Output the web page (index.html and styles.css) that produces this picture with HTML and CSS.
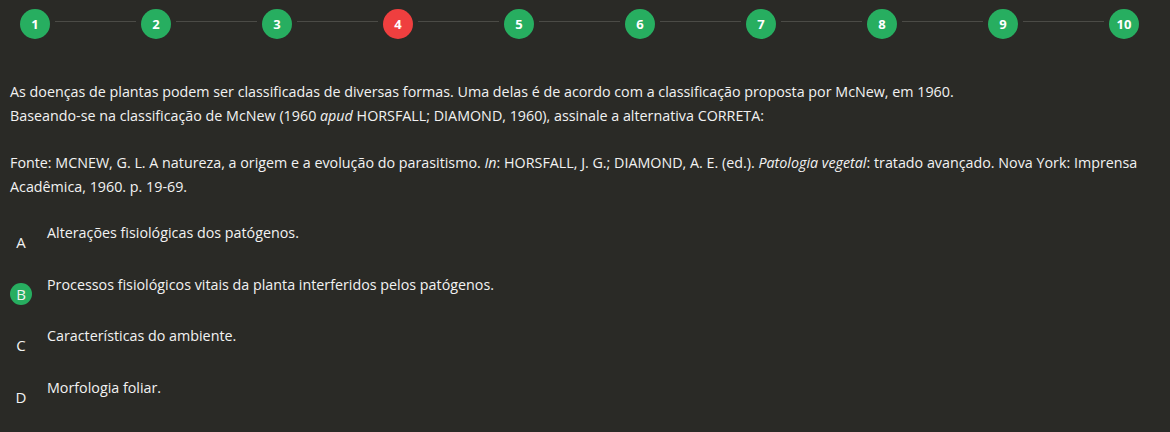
FILE: index.html
```html
<!DOCTYPE html>
<html lang="pt-BR">
<head>
<meta charset="utf-8">
<link rel="stylesheet" href="styles.css">
</head>
<body>
<div class="page">
  <nav class="steps">
    <span class="step">1</span><span class="line"></span>
    <span class="step">2</span><span class="line"></span>
    <span class="step">3</span><span class="line"></span>
    <span class="step current">4</span><span class="line"></span>
    <span class="step">5</span><span class="line"></span>
    <span class="step">6</span><span class="line"></span>
    <span class="step">7</span><span class="line"></span>
    <span class="step">8</span><span class="line"></span>
    <span class="step">9</span><span class="line"></span>
    <span class="step">10</span>
  </nav>
  <section class="question">
    <p class="stem">As doenças de plantas podem ser classificadas de diversas formas. Uma delas é de acordo com a classificação proposta por McNew, em 1960.<br>Baseando-se na classificação de McNew (1960 <em>apud</em> HORSFALL; DIAMOND, 1960), assinale a alternativa CORRETA:</p>
    <p class="source">Fonte: MCNEW, G. L. A natureza, a origem e a evolução do parasitismo. <em>In</em>: HORSFALL, J. G.; DIAMOND, A. E. (ed.). <em>Patologia vegetal</em>: tratado avançado. Nova York: Imprensa Acadêmica, 1960. p. 19-69.</p>
    <ul class="options">
      <li class="option"><span class="letter">A</span><span class="text">Alterações fisiológicas dos patógenos.</span></li>
      <li class="option selected"><span class="letter">B</span><span class="text">Processos fisiológicos vitais da planta interferidos pelos patógenos.</span></li>
      <li class="option"><span class="letter">C</span><span class="text">Características do ambiente.</span></li>
      <li class="option"><span class="letter">D</span><span class="text">Morfologia foliar.</span></li>
    </ul>
  </section>
</div>
</body>
</html>
```
FILE: styles.css
```css
html, body {
  margin: 0;
  padding: 0;
  background: #2a2a26;
}
body {
  font-family: "Open Sans", "Liberation Sans", sans-serif;
  color: #f2f2f2;
  font-size: 14.3px;
}
.page {
  width: 1170px;
  height: 432px;
  overflow: hidden;
}
.steps {
  display: flex;
  align-items: center;
  padding: 9px 31px 0 20px;
  height: 30px;
}
.step {
  flex: 0 0 30px;
  width: 30px;
  height: 30px;
  border-radius: 50%;
  background: #27ae60;
  color: #fff;
  font-weight: 700;
  font-size: 13px;
  display: flex;
  align-items: center;
  justify-content: center;
}
.step.current {
  background: #ef3f3f;
}
.line {
  flex: 1;
  height: 1px;
  background: #4b4b46;
  margin: -5px 5px 0;
}
.question {
  padding: 0 10px;
  margin-top: 41px;
}
.stem, .source {
  margin: 0;
  line-height: 24px;
}
.source {
  margin-top: 23px;
}
em { font-style: italic; }
.options {
  list-style: none;
  margin: 24px 0 0;
  padding: 0;
}
.option {
  display: flex;
  align-items: flex-start;
  height: 51.5px;
}
.letter {
  flex: 0 0 22px;
  width: 22px;
  height: 22px;
  margin-top: 8px;
  border-radius: 50%;
  display: flex;
  align-items: center;
  justify-content: center;
  font-size: 15px;
}
.selected .letter {
  background: #27ae60;
}
.text {
  margin-left: 15px;
  line-height: 20px;
}
```
